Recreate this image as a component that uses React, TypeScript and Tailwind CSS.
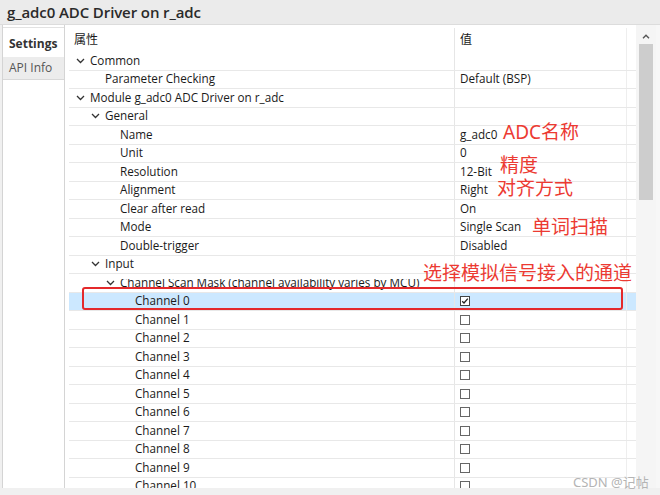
import React from "react";

type Row = { label: string; level: number; expand?: boolean; value?: string; check?: "on" | "off"; sel?: boolean };

const rows: Row[] = [
  { label: "Common", level: 0, expand: true },
  { label: "Parameter Checking", level: 1, value: "Default (BSP)" },
  { label: "Module g_adc0 ADC Driver on r_adc", level: 0, expand: true },
  { label: "General", level: 1, expand: true },
  { label: "Name", level: 2, value: "g_adc0" },
  { label: "Unit", level: 2, value: "0" },
  { label: "Resolution", level: 2, value: "12-Bit" },
  { label: "Alignment", level: 2, value: "Right" },
  { label: "Clear after read", level: 2, value: "On" },
  { label: "Mode", level: 2, value: "Single Scan" },
  { label: "Double-trigger", level: 2, value: "Disabled" },
  { label: "Input", level: 1, expand: true },
  { label: "Channel Scan Mask (channel availability varies by MCU)", level: 2, expand: true },
  { label: "Channel 0", level: 3, check: "on", sel: true },
  ...Array.from({ length: 10 }, (_, i) => ({ label: `Channel ${i + 1}`, level: 3, check: "off" as const })),
];

const indent = ["pl-[7px]", "pl-[22px]", "pl-[37px]", "pl-[52px]"];

function Chevron() {
  return (
    <svg width="9" height="6" viewBox="0 0 9 6" className="mr-[5px] shrink-0">
      <polyline points="1,1 4.5,4.5 8,1" fill="none" stroke="#333" strokeWidth="1.3" />
    </svg>
  );
}

function Check({ on }: { on: boolean }) {
  return (
    <span className={`inline-flex items-center justify-center w-[10px] h-[10px] border ${on ? "border-[#444]" : "border-[#666]"} bg-white`}>
      {on && (
        <svg width="8" height="8" viewBox="0 0 8 8">
          <polyline points="1.2,4.2 3,6 6.8,1.6" fill="none" stroke="#222" strokeWidth="1.3" />
        </svg>
      )}
    </span>
  );
}

export default function App() {
  const font = { fontFamily: '"Open Sans", "Noto Sans", "Noto Sans CJK SC", sans-serif' };
  return (
    <div className="relative w-[660px] h-[495px] bg-[#f0f0f0] overflow-hidden text-[#1a1a1a]" style={font}>
      <div className="h-[25px] bg-[#ebebeb] border-b border-[#dcdcdc] flex items-center pl-[7px]">
        <span className="text-[15px] font-semibold text-[#2a2a2a] tracking-[-0.1px]">g_adc0 ADC Driver on r_adc</span>
      </div>
      <div className="flex h-[463px]">
        <div className="w-[65px] ml-[2px] border-l border-r border-[#d4d4d4] bg-white flex flex-col pt-[2px]">
          <div className="h-[30px] bg-white flex items-center pl-[6px] pt-[2px] text-[12px] font-bold text-[#333] border-t border-[#e2e2e2]">Settings</div>
          <div className="h-[23px] bg-[#ececec] flex items-center pl-[6px] text-[12px] text-[#555] border-b border-[#d8d8d8]">API Info</div>
        </div>
        <div className="flex-1 flex bg-white">
          <div className="w-[571px] pl-[4px] pt-[3px] overflow-hidden">
            <div className="flex h-[24px] text-[12px]">
              <div className="w-[385px] pl-[5px] flex items-center">属性</div>
              <div className="w-[172px] border-l border-[#e6e6e6] pl-[5px] flex items-center">值</div>
              <div className="w-[9px] border-l border-[#eeeeee]" />
            </div>
            {rows.map((r, i) => (
              <div key={i} className={`flex h-[18.5px] text-[11.7px] leading-none border-b border-[#e8e8e8] ${r.sel ? "bg-[#cce8ff]" : ""}`}>
                <div className={`w-[385px] flex items-center whitespace-nowrap overflow-hidden ${indent[r.level]}`}>
                  {r.expand && <Chevron />}
                  {!r.expand && <span className="w-[14px] shrink-0" />}
                  <span>{r.label}</span>
                </div>
                <div className="w-[172px] border-l border-[#e6e6e6] pl-[5px] flex items-center whitespace-nowrap">
                  {r.value}
                  {r.check && <Check on={r.check === "on"} />}
                </div>
                <div className="w-[9px] border-l border-[#eeeeee]" />
              </div>
            ))}
          </div>
          <div className="w-[20px] bg-[#f5f5f5] flex flex-col items-center pt-[5px]">
            <div className="h-[12px] w-[14px] flex items-center justify-center">
              <svg width="8" height="5" viewBox="0 0 8 5">
                <polyline points="1,4.2 4,1.2 7,4.2" fill="none" stroke="#555" strokeWidth="1.4" />
              </svg>
            </div>
            <div className="w-[14px] h-[156px] bg-[#cdcdcd] mt-[2px]" />
          </div>
          <div className="w-[4px] bg-[#f7f7f7]" />
        </div>
      </div>

      {/* annotations */}
      <div className="absolute left-[100px] top-[274px] w-[320px] h-[5px] bg-white" />
      <div className="absolute left-[82px] top-[287px] w-[541px] h-[23px] border-2 border-[#e4292b] rounded-[3px]" />
      <div className="absolute text-[19px] leading-none text-[#ec3a32]" style={{ left: 503, top: 123, fontFamily: '"Noto Sans", "Noto Sans CJK SC", sans-serif' }}>ADC名称</div>
      <div className="absolute text-[19px] leading-none text-[#ec3a32]" style={{ left: 500, top: 154, fontFamily: '"Noto Sans CJK SC", sans-serif' }}>精度</div>
      <div className="absolute text-[19px] leading-none text-[#ec3a32]" style={{ left: 497, top: 177, fontFamily: '"Noto Sans CJK SC", sans-serif' }}>对齐方式</div>
      <div className="absolute text-[19px] leading-none text-[#ec3a32]" style={{ left: 532, top: 216, fontFamily: '"Noto Sans CJK SC", sans-serif' }}>单词扫描</div>
      <div className="absolute text-[19px] leading-none text-[#ec3a32]" style={{ left: 423, top: 262, fontFamily: '"Noto Sans CJK SC", sans-serif' }}>选择模拟信号接入的通道</div>
      <div className="absolute text-[13px] leading-none text-[#b4b4b4]" style={{ left: 573, top: 476, fontFamily: '"Noto Sans", "Noto Sans CJK SC", sans-serif' }}>CSDN @记帖</div>
    </div>
  );
}
